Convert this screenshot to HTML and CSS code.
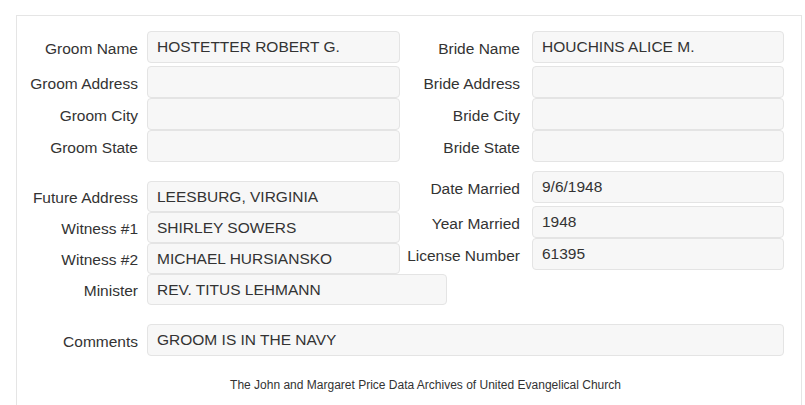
FILE: index.html
```html
<!DOCTYPE html>
<html lang="en">
<head>
    <meta charset="UTF-8">
    <meta name="viewport" content="width=device-width, initial-scale=1.0">
    <title>Marriage Record</title>
    <link rel="stylesheet" href="styles.css">
</head>
<body>
    <div class="page">
        <div class="record">
            <div class="section top">
                <div class="col left">
                    <div class="row first"><label>Groom Name</label><div class="field">HOSTETTER ROBERT G.</div></div>
                    <div class="row"><label>Groom Address</label><div class="field"></div></div>
                    <div class="row"><label>Groom City</label><div class="field"></div></div>
                    <div class="row"><label>Groom State</label><div class="field"></div></div>
                </div>
                <div class="col right">
                    <div class="row first"><label>Bride Name</label><div class="field">HOUCHINS ALICE M.</div></div>
                    <div class="row"><label>Bride Address</label><div class="field"></div></div>
                    <div class="row"><label>Bride City</label><div class="field"></div></div>
                    <div class="row"><label>Bride State</label><div class="field"></div></div>
                </div>
            </div>

            <div class="section bottom">
                <div class="col left">
                    <div class="row short"><label>Future Address</label><div class="field">LEESBURG, VIRGINIA</div></div>
                    <div class="row short"><label>Witness #1</label><div class="field">SHIRLEY SOWERS</div></div>
                    <div class="row short"><label>Witness #2</label><div class="field">MICHAEL HURSIANSKO</div></div>
                    <div class="row short"><label>Minister</label><div class="field wide">REV. TITUS LEHMANN</div></div>
                </div>
                <div class="col right">
                    <div class="row first"><label>Date Married</label><div class="field">9/6/1948</div></div>
                    <div class="row"><label>Year Married</label><div class="field">1948</div></div>
                    <div class="row"><label>License Number</label><div class="field">61395</div></div>
                </div>
            </div>

            <div class="section comments">
                <div class="row"><label>Comments</label><div class="field full">GROOM IS IN THE NAVY</div></div>
            </div>

            <p class="footer">The John and Margaret Price Data Archives of United Evangelical Church</p>
        </div>
    </div>
</body>
</html>
```

FILE: styles.css
```css
body {
    margin: 0;
    font-family: "Liberation Sans", Arial, sans-serif;
    color: #333;
    background: #fff;
}

.page {
    padding: 15px 0 0 16px;
}

.record {
    width: 786px;
    min-height: 390px;
    box-sizing: border-box;
    border: 1px solid #e5e5e5;
    border-bottom: none;
    padding-top: 15px;
}

.section {
    display: flex;
}

.col.left {
    width: 383px;
    --lw: 121px;
    --g: 9px;
}

.col.right {
    width: 384px;
    --lw: 120px;
    --g: 12px;
}

.row {
    display: grid;
    grid-template-columns: var(--lw) auto;
    column-gap: var(--g);
    align-items: center;
}

.row.first {
    margin-bottom: 3px;
}

label {
    padding-top: 3px;
    text-align: right;
    font-size: 15.5px;
    white-space: nowrap;
}

.field {
    width: 253px;
    height: 32px;
    box-sizing: border-box;
    padding: 0 9px;
    line-height: 30px;
    font-size: 15.5px;
    background: #f7f7f7;
    border: 1px solid #e4e4e4;
    border-radius: 4px;
    white-space: nowrap;
}

.right .field {
    width: 252px;
}

.short .field {
    height: 31px;
    line-height: 29px;
}

.field.wide {
    width: 300px;
}

.bottom {
    margin-top: 9px;
}

.bottom .col.left {
    padding-top: 10px;
}

.comments {
    margin-top: 19px;
    --lw: 121px;
    --g: 9px;
}

.field.full {
    width: 637px;
}

.footer {
    margin: 21px 0 0;
    padding-left: 33px;
    text-align: center;
    font-size: 12px;
    line-height: 16px;
}
```
